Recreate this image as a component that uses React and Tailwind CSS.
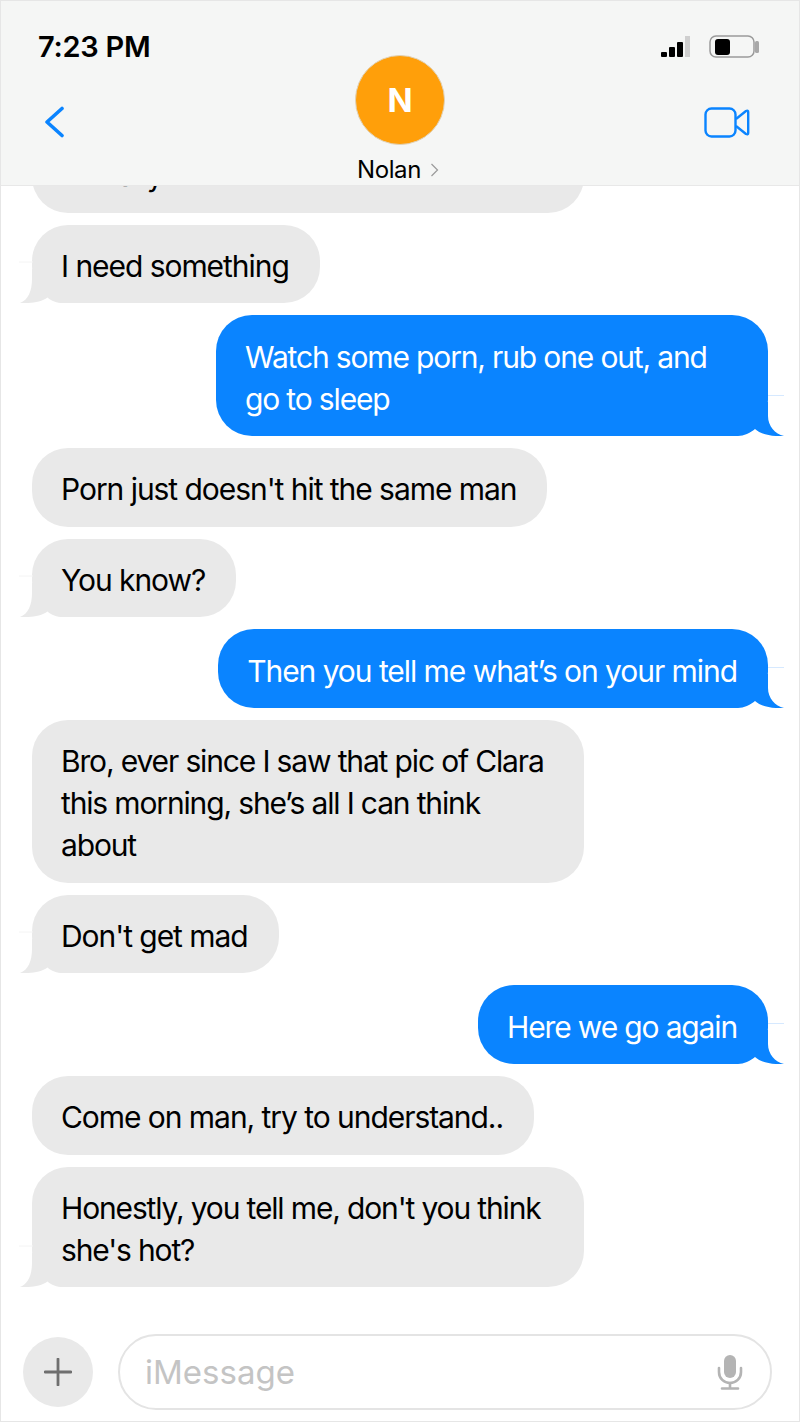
const font = { fontFamily: "Inter, 'Liberation Sans', sans-serif" };

function TailLeft() {
  return (
    <svg className="absolute left-[-13px] bottom-0" width="56" height="42" viewBox="0 0 56 42">
      <path d="M0 1 H14" stroke="#f4f4f4" strokeWidth="1" fill="none" />
      <path d="M13 8 L13 18 C13 30 9 39 1 42 C10 42.500 22 41.500 28.500 36.500 C32 40 38 42 44 42 L56 42 L56 8 Z" fill="#e9e9e9" />
    </svg>
  );
}

function TailRight() {
  return (
    <svg className="absolute right-[-16px] bottom-0" width="60" height="42" viewBox="0 0 60 42">
      <path d="M44 1.500 H60" stroke="#d6e9ff" strokeWidth="1" fill="none" />
      <path d="M44 8 L44 22 C44 32 51 40 60 42 C50 42.500 38 41.500 31 35 C26 39 20 42 14 42 L0 42 L0 8 Z" fill="#0a84ff" />
    </svg>
  );
}

function Bubble({ me, tail, wide, tight, children }) {
  return (
    <div
      className={`relative rounded-[36px] pb-[16.330px] pt-[20.330px] pl-[29px] pr-[31px] text-[30px] leading-[42px] whitespace-nowrap ${
        tight ? "tracking-[-1.15px]" : "tracking-[-1.05px]"
      } ${me ? "self-end mr-[31px] bg-[#0a84ff] text-white" : "self-start ml-[31px] bg-[#e9e9e9] text-black"} ${wide ? "w-[552px]" : ""}`}
    >
      {tail ? me ? <TailRight /> : <TailLeft /> : null}
      <div className="relative">{children}</div>
    </div>
  );
}

export default function App() {
  return (
    <div className="relative flex h-[1422px] w-[800px] flex-col overflow-hidden border border-[#e6e6e6] bg-white" style={font}>
      <header className="relative z-10 h-[185px] shrink-0 border-b border-[#e8e8e8] bg-[#f5f6f5]">
        <div className="flex items-start justify-between pl-[37px] pr-[40px] pt-[28px]">
          <span className="text-[29px] font-semibold leading-[36px] tracking-[-0.25px] text-black">7:23 PM</span>
          <div className="flex items-center gap-[18px] pt-[6px]">
            <svg width="30" height="24" viewBox="0 0 30 24">
              <rect x="0" y="17" width="6" height="5" rx="1" fill="#000" />
              <rect x="8" y="12" width="6" height="10" rx="1" fill="#000" />
              <rect x="16" y="7" width="6" height="15" rx="1" fill="#000" />
              <rect x="24" y="1" width="5" height="21" fill="#cfcfcf" />
            </svg>
            <svg width="50" height="24" viewBox="0 0 50 24">
              <rect x="1" y="1" width="44" height="21" rx="6" fill="none" stroke="#9a9a9a" strokeWidth="1.500" />
              <rect x="6" y="4" width="15" height="16" rx="3" fill="#000" />
              <rect x="46" y="6" width="4" height="12" rx="1.500" fill="#a8a8a8" />
            </svg>
          </div>
        </div>
        <div className="relative flex items-start justify-between pl-[43px] pr-[49px] pt-[41px]">
          <svg width="21" height="32" viewBox="0 0 21 32">
            <path d="M18 2.500 L3 16 L18 29.500" fill="none" stroke="#0a84ff" strokeWidth="3.600" strokeLinecap="round" strokeLinejoin="round" />
          </svg>
          <svg width="46" height="31" viewBox="0 0 46 31" className="mt-[1px]">
            <rect x="1.500" y="1.500" width="30" height="28" rx="6" fill="none" stroke="#0a84ff" strokeWidth="2.400" />
            <path d="M32 12 L42 4 Q44.200 3 44.200 5 V26 Q44.200 28 42 27 L32 19" fill="none" stroke="#0a84ff" strokeWidth="2.400" strokeLinejoin="round" />
          </svg>
        </div>
        <div className="absolute left-[354px] top-[54px] flex w-[90px] flex-col items-center">
          <div className="flex h-[90px] w-[90px] items-center justify-center rounded-full border border-[#e0d2b8] bg-[#ff9f0a] pt-[2px] text-[33px] font-bold text-white">N</div>
          <div className="mt-[9px] flex -translate-x-[2px] items-center gap-[9px] whitespace-nowrap text-[24px] leading-[32px] tracking-[-0.4px] text-black">
            <span>Nolan</span>
            <svg width="9" height="14" viewBox="0 0 9 14"><path d="M1.500 1 L7.500 7 L1.500 13" fill="none" stroke="#9a9a9a" strokeWidth="1.200" /></svg>
          </div>
        </div>
      </header>

      <main className="min-h-0 flex-1 overflow-hidden">
        <div className="-mt-[52px] flex flex-col gap-[12px]">
          <Bubble wide>Literally</Bubble>
          <Bubble tail>I need something</Bubble>
          <Bubble me tail wide tight>Watch some porn, rub one out, and<br />go to sleep</Bubble>
          <Bubble>Porn just doesn't hit the same man</Bubble>
          <Bubble tail>You know?</Bubble>
          <Bubble me tail>Then you tell me what’s on your mind</Bubble>
          <Bubble wide tight>Bro, ever since I saw that pic of Clara<br />this morning, she’s all I can think<br />about</Bubble>
          <Bubble tail>Don't get mad</Bubble>
          <Bubble me tail tight>Here we go again</Bubble>
          <Bubble>Come on man, try to understand..</Bubble>
          <Bubble tail wide tight>Honestly, you tell me, don't you think<br />she's hot?</Bubble>
        </div>
      </main>

      <footer className="flex shrink-0 items-center gap-[25px] pb-[11px] pl-[22px] pr-[27px]">
        <div className="flex h-[70px] w-[70px] shrink-0 items-center justify-center rounded-full bg-[#e9e9e9]">
          <svg width="28" height="28" viewBox="0 0 28 28"><path d="M14 1 V27 M1 14 H27" stroke="#6f6f6f" strokeWidth="2.800" strokeLinecap="round" /></svg>
        </div>
        <div className="flex h-[76px] flex-1 items-center justify-between rounded-[38px] border-2 border-[#e4e4e4] pl-[25px] pr-[27px]">
          <span className="pt-[2px] text-[33px] text-[#c4c4c4]">iMessage</span>
          <svg width="26" height="36" viewBox="0 0 26 36">
            <rect x="7" y="1" width="12" height="23" rx="6" fill="#b4b4b4" />
            <path d="M2 14 V18 C2 24.500 7 29 13 29 C19 29 24 24.500 24 18 V14" fill="none" stroke="#b4b4b4" strokeWidth="2.600" strokeLinecap="round" />
            <path d="M13 29 V34 M5 34.500 H21" stroke="#b4b4b4" strokeWidth="2.600" strokeLinecap="round" />
          </svg>
        </div>
      </footer>
    </div>
  );
}
